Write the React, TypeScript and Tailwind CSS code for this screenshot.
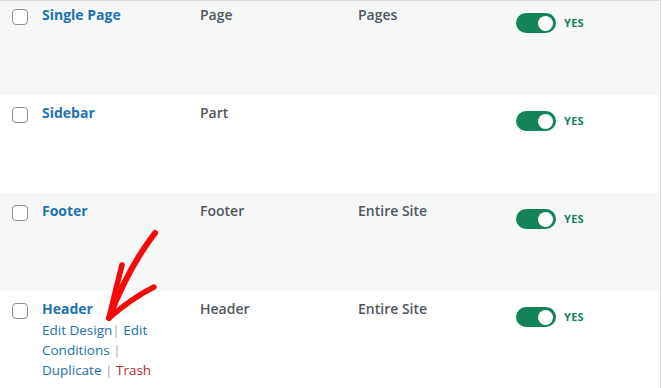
import React from 'react';

type Row = {
  title: string;
  type: string;
  location: string;
  bg: string;
  actions?: boolean;
};

const ROWS: Row[] = [
  { title: 'Single Page', type: 'Page', location: 'Pages', bg: 'bg-[#f6f7f7]' },
  { title: 'Sidebar', type: 'Part', location: '', bg: 'bg-white' },
  { title: 'Footer', type: 'Footer', location: 'Entire Site', bg: 'bg-[#f6f7f7]' },
  { title: 'Header', type: 'Header', location: 'Entire Site', bg: 'bg-white', actions: true },
];

const Toggle: React.FC = () => (
  <div className="flex items-center gap-[8px] mt-[8px]">
    <div className="w-[40px] h-[20px] rounded-full bg-[#138457] flex items-center justify-end pr-[3px]">
      <div className="w-[15px] h-[15px] rounded-full bg-white" />
    </div>
    <span className="text-[11px] font-bold text-[#138457] tracking-wide">YES</span>
  </div>
);

const Actions: React.FC = () => (
  <div className="text-[13.5px] leading-[20px] font-medium text-[#2271b1] mt-[1px]">
    <div>
      Edit Design<span className="text-[#a7aaad]">|</span> Edit
    </div>
    <div>
      Conditions <span className="text-[#a7aaad]">|</span>
    </div>
    <div>
      Duplicate <span className="text-[#a7aaad]">|</span> <span className="text-[#b32d2e]">Trash</span>
    </div>
  </div>
);

const Arrow: React.FC = () => (
  <svg className="absolute left-0 top-0 pointer-events-none" width="662" height="388" viewBox="0 0 662 388">
    <g fill="none" stroke="#f50a0a" strokeLinecap="round" strokeLinejoin="round">
      <path d="M155 233 Q 128 268 109 318" strokeWidth="6" />
      <path d="M122 265 Q 115 292 109 318" strokeWidth="5.5" />
      <path d="M109 318 Q 132 298 154 287" strokeWidth="5.5" />
    </g>
  </svg>
);

const App: React.FC = () => {
  return (
    <div className="relative w-[662px] h-[388px] bg-white overflow-hidden" style={{ fontFamily: '"Open Sans", "Noto Sans", sans-serif' }}>
      <div className="w-[661px] border-r border-b border-t border-[#dcdcde]">
        {ROWS.map((row, i) => (
          <div
            key={row.title}
            className={`${row.bg} flex items-start pl-[12px] ${i === 0 ? 'h-[94px] pt-[4px]' : 'h-[98px] pt-[8px]'}`}
          >
            <div className="w-[16px] h-[16px] mt-[4px] rounded-[4px] border border-[#8c8f94] bg-white shrink-0" />
            <div className="w-[158px] ml-[14px] shrink-0 pr-[40px]">
              <div className="text-[14px] leading-[20px] font-bold text-[#2271b1]">{row.title}</div>
              {row.actions && <Actions />}
            </div>
            <div className="w-[158px] shrink-0 text-[14px] leading-[20px] font-semibold text-[#50575e]">{row.type}</div>
            <div className="w-[158px] shrink-0 text-[14px] leading-[20px] font-semibold text-[#50575e]">{row.location}</div>
            <Toggle />
          </div>
        ))}
      </div>
      <Arrow />
    </div>
  );
};

export default App;
